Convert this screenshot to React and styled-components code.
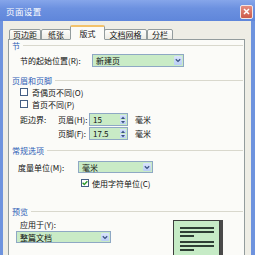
import styled, { createGlobalStyle } from 'styled-components'

const GlobalStyle = createGlobalStyle`
  html, body {
    margin: 0;
    padding: 0;
    width: 255px;
    height: 255px;
    overflow: hidden;
  }
  body {
    font-family: "Noto Sans CJK SC", "Liberation Sans", sans-serif;
    font-size: 8.5px;
    color: #111111;
  }
`;

const Window = styled.div`
  width: 255px;
  height: 255px;
  display: flex;
  flex-direction: column;
  overflow: hidden;
`;

const TitleBar = styled.div`
  height: 21px;
  flex: none;
  display: flex;
  align-items: center;
  justify-content: space-between;
  padding: 0 2px 0 6px;
  background: linear-gradient(#86a6ea, #6c91e0 40%, #5f86da);
  box-sizing: border-box;
`;

const Title = styled.span`
  color: #ffffff;
  font-size: 8.5px;
  letter-spacing: 0.4px;
`;

const CloseButton = styled.div`
  width: 11px;
  height: 12px;
  margin-top: 2px;
  border: 1px solid #f2e6e6;
  border-radius: 2px;
  background: linear-gradient(#e58c80, #cc5a4a);
  display: flex;
  align-items: center;
  justify-content: center;
`;

const Frame = styled.div`
  flex: 1;
  display: flex;
  flex-direction: column;
  background: #eeede5;
  border-left: 3px solid #6e93de;
  border-right: 4px solid #6e93de;
  padding: 4px 6px 0 5px;
  min-height: 0;
`;

const TabRow = styled.div`
  height: 15px;
  display: flex;
  align-items: flex-end;
  padding-left: 1px;
  position: relative;
  z-index: 1;
  margin-bottom: -1px;
`;

const Tab = styled.div`
  width: ${p => p.w}px;
  height: ${p => (p.active ? 15 : 11)}px;
  box-sizing: border-box;
  display: flex;
  align-items: center;
  justify-content: center;
  font-size: 8px;
  border: 1px solid #939c9d;
  border-bottom: ${p => (p.active ? '1px solid #fbfbf8' : '1px solid #939c9d')};
  border-top: ${p => (p.active ? '2px solid #f3c26a' : '1px solid #939c9d')};
  border-radius: 2px 2px 0 0;
  margin: ${p => (p.active ? '0 -1px' : '0')};
  background: ${p => (p.active ? '#fbfbf8' : 'linear-gradient(#fdfdfb, #ecebe4)')};
  position: relative;
  z-index: ${p => (p.active ? 2 : 1)};
`;

const Panel = styled.div`
  flex: 1;
  border: 1px solid #939c9d;
  background: #fbfbf8;
  display: flex;
  flex-direction: column;
  padding: 0 1px 0 0;
`;

const Heading = styled.div`
  height: 10px;
  margin-top: ${p => p.mt || 0}px;
  display: flex;
  align-items: center;
  gap: 3px;
  padding-left: 3px;
  color: #2d5db6;
  font-size: 8px;

  &::after {
    content: "";
    flex: 1;
    height: 1px;
    background: #d9d8cd;
  }
`;

const Row = styled.div`
  height: ${p => p.h || 10}px;
  margin-top: ${p => p.mt || 0}px;
  display: flex;
  align-items: center;
  padding-left: ${p => (p.pl === undefined ? 11 : p.pl)}px;
  font-size: 8px;
  white-space: nowrap;
`;

const Label = styled.span`
  width: ${p => (p.w ? p.w + 'px' : 'auto')};
  flex: none;
`;

const Select = styled.div`
  width: ${p => p.w}px;
  height: ${p => p.h || 13}px;
  box-sizing: border-box;
  border: 1px solid #8ea8c4;
  background: #c9ebc6;
  display: flex;
  align-items: center;
  justify-content: space-between;
  padding-left: 3px;
  font-size: 8px;
  flex: none;
`;

const ArrowButton = styled.div`
  width: 8px;
  align-self: stretch;
  margin: 1px;
  background: linear-gradient(#d9e4fb, #b9cdf6);
  border-radius: 1px;
  display: flex;
  align-items: center;
  justify-content: center;
`;

const Input = styled.div`
  width: 31px;
  height: 13px;
  box-sizing: border-box;
  border: 1px solid #8ea8c4;
  border-right: none;
  background: #c9ebc6;
  display: flex;
  align-items: center;
  padding-left: 3px;
  font-size: 8px;
`;

const Spinner = styled.div`
  width: 8px;
  height: 13px;
  box-sizing: border-box;
  border: 1px solid #8ea8c4;
  border-left: none;
  background: #c9ebc6;
  display: flex;
  flex-direction: column;
  gap: 1px;
  padding: 1px 1px 1px 0;
`;

const SpinHalf = styled.div`
  flex: 1;
  background: linear-gradient(#d9e4fb, #b9cdf6);
  display: flex;
  align-items: center;
  justify-content: center;
`;

const Unit = styled.span`
  margin-left: 7px;
`;

const Box = styled.div`
  width: 8px;
  height: 8px;
  box-sizing: border-box;
  border: 1px solid #445f84;
  background: #ffffff;
  margin-right: ${p => p.mr || 4}px;
  display: flex;
  align-items: center;
  justify-content: center;
  flex: none;
`;

const PreviewArea = styled.div`
  display: flex;
`;

const PreviewLeft = styled.div`
  display: flex;
  flex-direction: column;
`;

const Page = styled.div`
  width: 47px;
  height: 50px;
  margin: 4px 0 0 62px;
  box-sizing: border-box;
  border: 1px solid #3d3d3d;
  background: #c6ebc6;
  box-shadow: 3px 0 0 #4a4a4a;
  padding: 6px 5px 0 6px;
  display: flex;
  flex-direction: column;
`;

const PageLine = styled.div`
  height: 2px;
  width: ${p => (p.short ? 14 : 34)}px;
  background: #2e3f35;
  margin-bottom: ${p => (p.short ? 4 : 2)}px;
`;

const Chevron = () => (
  <svg width="6" height="5" viewBox="0 0 6 5">
    <path d="M0.8 1.2 L3 3.4 L5.2 1.2" fill="none" stroke="#3b5282" strokeWidth="1.3" />
  </svg>
);

const Tri = ({ up }) => (
  <svg width="4" height="3" viewBox="0 0 4 3">
    <path d={up ? 'M0 3 L2 0.5 L4 3 Z' : 'M0 0 L2 2.5 L4 0 Z'} fill="#3b5282" />
  </svg>
);

const Check = () => (
  <svg width="6" height="6" viewBox="0 0 6 6">
    <path d="M0.6 2.8 L2.3 4.5 L5.4 1.2" fill="none" stroke="#2d9a2d" strokeWidth="1.4" />
  </svg>
);

const Spin = () => (
  <Spinner>
    <SpinHalf><Tri up /></SpinHalf>
    <SpinHalf><Tri /></SpinHalf>
  </Spinner>
);

const tabs = [
  { label: '页边距', w: 32 },
  { label: '纸张', w: 30 },
  { label: '版式', w: 35, active: true },
  { label: '文档网格', w: 43 },
  { label: '分栏', w: 26 },
];

const App = () => {
  return (
    <Window>
      <GlobalStyle />
      <TitleBar>
        <Title>页面设置</Title>
        <CloseButton>
          <svg width="7" height="7" viewBox="0 0 7 7">
            <path d="M1 1 L6 6 M6 1 L1 6" stroke="#ffffff" strokeWidth="1.5" />
          </svg>
        </CloseButton>
      </TitleBar>
      <Frame>
        <TabRow>
          {tabs.map(t => (
            <Tab key={t.label} w={t.w} active={t.active}>{t.label}</Tab>
          ))}
        </TabRow>
        <Panel>
          <Heading>节</Heading>
          <Row h={13} mt={4}>
            <Label w={72}>节的起始位置(R):</Label>
            <Select w={92}>
              新建页
              <ArrowButton><Chevron /></ArrowButton>
            </Select>
          </Row>

          <Heading mt={8}>页眉和页脚</Heading>
          <Row mt={2}>
            <Box />奇偶页不同(O)
          </Row>
          <Row mt={2}>
            <Box />首页不同(P)
          </Row>
          <Row h={13} mt={4}>
            <Label w={38}>距边界:</Label>
            <Label w={31}>页眉(H):</Label>
            <Input>15</Input>
            <Spin />
            <Unit>毫米</Unit>
          </Row>
          <Row h={13} mt={1}>
            <Label w={38} />
            <Label w={31}>页脚(F):</Label>
            <Input>17.5</Input>
            <Spin />
            <Unit>毫米</Unit>
          </Row>

          <Heading mt={5}>常规选项</Heading>
          <Row h={12} mt={6} pl={9}>
            <Label w={60}>度量单位(M):</Label>
            <Select w={75} h={12}>
              毫米
              <ArrowButton><Chevron /></ArrowButton>
            </Select>
          </Row>
          <Row mt={5} pl={72}>
            <Box mr={3}><Check /></Box>使用字符单位(C)
          </Row>

          <Heading mt={18}>预览</Heading>
          <PreviewArea>
            <PreviewLeft>
              <Row mt={3}>应用于(Y):</Row>
              <Row h={12} mt={2} pl={7}>
                <Select w={95} h={12}>
                  整篇文档
                  <ArrowButton><Chevron /></ArrowButton>
                </Select>
              </Row>
            </PreviewLeft>
            <Page>
              <PageLine />
              <PageLine />
              <PageLine short />
              <PageLine />
              <PageLine />
              <PageLine short />
              <PageLine />
              <PageLine />
            </Page>
          </PreviewArea>
        </Panel>
      </Frame>
    </Window>
  );
};

export default App
